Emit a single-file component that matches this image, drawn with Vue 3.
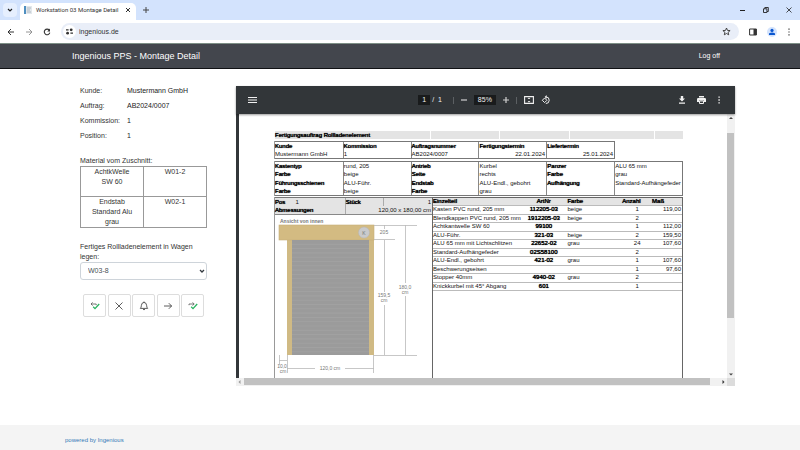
<template>
  <div class="browser">
    <!-- tab strip -->
    <div class="tab-strip">
      <button class="tab-search" aria-label="Search tabs">
        <svg width="6" height="6" viewBox="0 0 6 6"><path d="M1 2l2 2 2-2" fill="none" stroke="#1f1f1f" stroke-width="1.2" /></svg>
      </button>
      <div class="tab">
        <svg class="favicon" width="8" height="8" viewBox="0 0 8 8">
          <rect x="0" y="0" width="2" height="8" fill="#4f8fc0" />
          <rect x="2" y="0" width="6" height="8" fill="#e3e8ec" />
          <path d="M3 2h4M3 4h3M3 6h4" stroke="#b3bcc4" stroke-width="1" />
        </svg>
        <span class="tab-title">Workstation 03 Montage Detail</span>
        <button class="bare" aria-label="Close tab">
          <svg width="6" height="6" viewBox="0 0 6 6"><path d="M1 1l4 4M5 1L1 5" stroke="#333" stroke-width="1" /></svg>
        </button>
      </div>
      <button class="bare new-tab" aria-label="New tab">
        <svg width="6" height="6" viewBox="0 0 6 6"><path d="M3 0v6M0 3h6" stroke="#444" stroke-width="1" /></svg>
      </button>
      <div class="window-buttons">
        <button class="bare" aria-label="Minimize">
          <svg width="6" height="6" viewBox="0 0 6 6"><path d="M0 3.5h5" stroke="#222" stroke-width="1" /></svg>
        </button>
        <button class="bare" aria-label="Restore">
          <svg width="6" height="6" viewBox="0 0 6 6"><path d="M.5 1.8h3.4v3.7H.5zM1.8 1.8V.5h3.5v4H4" fill="none" stroke="#222" stroke-width=".9" /></svg>
        </button>
        <button class="bare" aria-label="Close">
          <svg width="6" height="6" viewBox="0 0 6 6"><path d="M.5.5l5 5M5.5.5l-5 5" stroke="#222" stroke-width=".8" /></svg>
        </button>
      </div>
    </div>

    <!-- address bar -->
    <div class="toolbar">
      <button class="bare" aria-label="Back">
        <svg width="8" height="8" viewBox="0 0 8 8"><path d="M7 4H1.3M4 1L1 4l3 3" fill="none" stroke="#333" stroke-width="1" /></svg>
      </button>
      <button class="bare" aria-label="Forward">
        <svg width="8" height="8" viewBox="0 0 8 8"><path d="M1 4h5.7M4 1l3 3-3 3" fill="none" stroke="#8a8a8a" stroke-width=".9" /></svg>
      </button>
      <button class="bare" aria-label="Reload">
        <svg width="8" height="8" viewBox="0 0 8 8"><path d="M6.3 2.2A2.8 2.8 0 1 0 6.8 4.6" fill="none" stroke="#333" stroke-width="1.1" /><path d="M7 .6v2.9H4.2z" fill="#333" /></svg>
      </button>
      <div class="omnibox">
        <span class="site-info">
          <svg width="7" height="7" viewBox="0 0 7 7"><path d="M0 1.8h2.6M4.4 5.2H7" stroke="#333" stroke-width="1.2" /><circle cx="5.2" cy="1.8" r="1.4" fill="#333" /><circle cx="1.6" cy="5.2" r="1.4" fill="#333" /></svg>
        </span>
        <input v-model="url" class="url" type="text" aria-label="Address" />
        <button class="bare" aria-label="Bookmark">
          <svg width="9" height="9" viewBox="0 0 9 9"><path d="M4.5 1l1 2.4 2.6.2-2 1.7.6 2.5-2.2-1.3-2.2 1.3.6-2.5-2-1.7 2.6-.2z" fill="none" stroke="#333" stroke-width=".9" /></svg>
        </button>
      </div>
      <button class="bare" aria-label="Side panel">
        <svg width="8" height="8" viewBox="0 0 8 8"><path d="M.6 1h6.8v6H.6z" fill="none" stroke="#333" stroke-width="1" /><path d="M4.5 1h3v6h-3z" fill="#333" /></svg>
      </button>
      <button class="bare" aria-label="Profile">
        <svg width="10" height="10" viewBox="0 0 10 10"><circle cx="5" cy="5" r="5" fill="#d3e3fd" /><circle cx="5" cy="3.4" r="1.6" fill="#0b57d0" /><path d="M2 8V7q0-1.5 3-1.5T8 7v1z" fill="#0b57d0" /></svg>
      </button>
      <button class="bare" aria-label="Menu">
        <svg width="4" height="8" viewBox="0 0 4 8"><path d="M1.4.6h1.2v1.2H1.4zM1.4 3.4h1.2v1.2H1.4zM1.4 6.2h1.2v1.2H1.4z" fill="#333" /></svg>
      </button>
    </div>

    <header class="navbar">
      <h1>Ingenious PPS - Montage Detail</h1>
      <a href="#">Log off</a>
    </header>

    <main class="content">
      <section class="side">
        <dl class="order">
          <div v-for="row in order" :key="row.label">
            <dt>{{ row.label }}</dt>
            <dd>{{ row.value }}</dd>
          </div>
        </dl>

        <table class="material">
          <caption>Material vom Zuschnitt:</caption>
          <tbody>
            <tr v-for="m in material" :key="m.place">
              <td>{{ m.name }}</td>
              <td>{{ m.place }}</td>
            </tr>
          </tbody>
        </table>

        <label class="cart-label" for="cart">Fertiges Rollladenelement in Wagen legen:</label>
        <div class="select-wrap">
          <select id="cart" v-model="cart">
            <option>W03-8</option>
          </select>
          <svg width="6" height="6" viewBox="0 0 6 6"><path d="M1 2l2 2 2-2" fill="none" stroke="#343a40" stroke-width="1.3" /></svg>
        </div>

        <div class="actions">
          <button aria-label="Fertig und zurück">
            <svg width="10" height="10" viewBox="0 0 10 10"><path d="M1.2 3h5v1.2M2.6 1.4L1 3l1.6 1.6" fill="none" stroke="#555" stroke-width=".8" /><path d="M3.2 5.8l1.8 1.8L9.2 3" fill="none" stroke="#27b35f" stroke-width="1.3" /></svg>
          </button>
          <button aria-label="Abbrechen">
            <svg width="10" height="10" viewBox="0 0 10 10"><path d="M1.5 1.5l7 7M8.5 1.5l-7 7" stroke="#333" stroke-width=".8" /></svg>
          </button>
          <button aria-label="Meldung">
            <svg width="10" height="10" viewBox="0 0 10 10"><path d="M1.3 7.4h7.4Q7.7 6.6 7.6 4.4 7.5 1.6 5 1.4 2.5 1.6 2.4 4.4 2.3 6.6 1.3 7.4zM5 .5v1M4 8.2q1 1.4 2 0" fill="none" stroke="#333" stroke-width=".8" /></svg>
          </button>
          <button aria-label="Weiter">
            <svg width="10" height="10" viewBox="0 0 10 10"><path d="M1 5h7.6M5.8 2.2L8.6 5 5.8 7.8" fill="none" stroke="#333" stroke-width=".8" /></svg>
          </button>
          <button aria-label="Fertig und weiter">
            <svg width="10" height="10" viewBox="0 0 10 10"><path d="M1 4.2V3h5M4.6 1.4L6.200 3 4.6 4.6" fill="none" stroke="#555" stroke-width=".8" /><path d="M3.2 5.8l1.8 1.8L9.2 3" fill="none" stroke="#27b35f" stroke-width="1.3" /></svg>
          </button>
        </div>
      </section>

      <section class="viewer">
        <div class="pdf-bar">
          <div class="pdf-left">
            <button class="bare" aria-label="Seitenleiste">
              <svg width="9" height="8" viewBox="0 0 9 8"><path d="M0 1.5h9M0 4h9M0 6.5h9" stroke="#f1f1f1" stroke-width="1" /></svg>
            </button>
          </div>
          <div class="pdf-mid">
            <input v-model="page" class="page-no" type="text" aria-label="Seite" />
            <span class="page-count">/ &nbsp;1</span>
            <i class="sep"></i>
            <button class="bare" aria-label="Verkleinern">
              <svg width="6" height="6" viewBox="0 0 6 6"><path d="M0 3h6" stroke="#d0d0d0" stroke-width="1.2" /></svg>
            </button>
            <input v-model="zoom" class="zoom" type="text" aria-label="Zoom" />
            <button class="bare" aria-label="Vergrößern">
              <svg width="6" height="6" viewBox="0 0 6 6"><path d="M0 3h6M3 0v6" stroke="#d0d0d0" stroke-width="1.2" /></svg>
            </button>
            <i class="sep"></i>
            <button class="bare" aria-label="An Seite anpassen">
              <svg width="10" height="8" viewBox="0 0 10 8"><path d="M.6.6h8.8v6.8H.6z" fill="none" stroke="#f1f1f1" stroke-width="1.1" /><path d="M5 1.5l1.4 1.6H3.6zM5 6.5l1.4-1.6H3.6z" fill="#f1f1f1" /></svg>
            </button>
            <button class="bare" aria-label="Drehen">
              <svg width="10" height="10" viewBox="0 0 10 10"><path d="M3.6 3l2.3 2.3-2.3 2.3-2.3-2.3z" fill="none" stroke="#f1f1f1" stroke-width="1" /><path d="M5 1.9a3.3 3.3 0 1 1 -.2 6.6" fill="none" stroke="#f1f1f1" stroke-width="1" /><path d="M5.6 0v3.8L3.6 1.9z" fill="#f1f1f1" /></svg>
            </button>
          </div>
          <div class="pdf-right">
            <button class="bare" aria-label="Herunterladen">
              <svg width="8" height="8" viewBox="0 0 8 8"><path d="M2.8 0h2.4v2.6H7L4 5.6l-3-3h1.8zM1 6.6h6v1.2H1z" fill="#f1f1f1" /></svg>
            </button>
            <button class="bare" aria-label="Drucken">
              <svg width="9" height="8" viewBox="0 0 9 8"><path d="M2 0h5v1.6H2zM1.2 2h6.6Q9 2 9 3.2V6H7V4.6H2V6H0V3.2Q0 2 1.2 2z" fill="#f1f1f1" /><path d="M2.5 5h4v2.5h-4z" fill="none" stroke="#f1f1f1" /></svg>
            </button>
            <button class="bare" aria-label="Weitere Aktionen">
              <svg width="4" height="8" viewBox="0 0 4 8"><path d="M1.4.4h1.4v1.4H1.4zM1.4 3.3h1.4v1.4H1.4zM1.4 6.2h1.4v1.4H1.4z" fill="#f1f1f1" /></svg>
            </button>
          </div>
        </div>

        <div class="pdf-body">
          <article class="sheet">
            <h2>
              <span class="strong">Fertigungsauftrag Rollladenelement</span>
              <i></i><i></i><i class="wide"></i><i class="last"></i>
            </h2>

            <table class="head">
              <thead>
                <tr><th v-for="h in head" :key="h.label">{{ h.label }}</th></tr>
              </thead>
              <tbody>
                <tr><td v-for="h in head" :key="h.label" :class="{ num: h.num }">{{ h.value }}</td></tr>
              </tbody>
            </table>

            <table class="specs">
              <tbody>
                <tr v-for="(row, i) in specs" :key="i">
                  <template v-for="(cell, j) in row" :key="j">
                    <th v-if="j % 2 === 0">{{ cell }}</th>
                    <td v-else>{{ cell }}</td>
                  </template>
                </tr>
              </tbody>
            </table>

            <div class="detail">
              <div class="position">
                <table class="size">
                  <tbody>
                    <tr>
                      <th class="pos">Pos</th>
                      <td>1</td>
                      <th class="line">Stück</th>
                      <td class="num line">1</td>
                    </tr>
                    <tr>
                      <th colspan="2">Abmessungen</th>
                      <td class="num line" colspan="2">120,00 x 180,00 cm</td>
                    </tr>
                  </tbody>
                </table>

                <!-- shutter seen from inside, with its dimensions -->
                <svg class="drawing" viewBox="-1 0 157 162">
                  <text x="4" y="8" class="caption">Ansicht von innen</text>
                  <rect x="11" y="24" width="87" height="116" fill="#d0ba84" />
                  <rect x="3" y="10" width="95" height="15" fill="#d3bb82" stroke="#c5ae78" stroke-width=".6" />
                  <rect x="16" y="25" width="77" height="115" fill="#9b9b9b" />
                  <path v-for="n in 26" :key="n" :d="`M16 ${25 + n * 4.3}h77`" stroke="#a6a6a6" stroke-width=".6" />
                  <circle cx="88" cy="17.5" r="5.5" fill="#c9cacc" stroke="#b5b5b5" stroke-width=".5" />
                  <text x="88" y="19.5" class="dim">K</text>
                  <g fill="none" stroke="#b9b9b9" stroke-width=".8">
                    <path d="M98 10.5h43M98 24.5h21M98 140.5h43" />
                    <path d="M108.5 10v4M108.5 25v52M108.5 90v50M129.5 10v58M129.5 81v59" />
                    <path d="M11.5 140v18M97.5 140v18M11 153.5h28M69 153.5h29M3.5 140v10M3 145.5h8" />
                  </g>
                  <text x="108" y="19" class="dim">205</text>
                  <text x="108" y="82" class="dim">159,5</text>
                  <text x="108" y="87" class="dim">cm</text>
                  <text x="129" y="74" class="dim">180,0</text>
                  <text x="129" y="79" class="dim">cm</text>
                  <text x="54" y="155" class="dim">120,0 cm</text>
                  <text x="6" y="153" class="dim">10,0</text>
                  <text x="7" y="158" class="dim">cm</text>
                </svg>
              </div>

              <div class="parts-box">
                <table class="parts">
                  <colgroup>
                    <col class="c-name" /><col class="c-no" /><col class="c-color" /><col class="c-count" /><col class="c-size" />
                  </colgroup>
                  <thead>
                    <tr><th>Einzelteil</th><th class="mid">ArtNr</th><th>Farbe</th><th>Anzahl</th><th>Maß</th></tr>
                  </thead>
                  <tbody>
                    <tr v-for="p in parts" :key="p[1] + p[0]">
                      <td>{{ p[0] }}</td>
                      <td class="mid strong">{{ p[1] }}</td>
                      <td>{{ p[2] }}</td>
                      <td class="mid">{{ p[3] }}</td>
                      <td class="num">{{ p[4] }}</td>
                    </tr>
                  </tbody>
                </table>
              </div>
            </div>
          </article>

          <div class="v-scroll">
            <svg width="8" height="8" viewBox="0 0 8 8"><path d="M4 3l2 2H2z" fill="#444" /></svg>
            <div class="track"><div class="thumb"></div></div>
            <svg width="8" height="8" viewBox="0 0 8 8"><path d="M4 5.5l2-2H2z" fill="#444" /></svg>
          </div>
        </div>

        <div class="h-scroll">
          <svg width="8" height="8" viewBox="0 0 8 8"><path d="M2.5 4l2-2v4z" fill="#999" /></svg>
          <div class="track"><div class="thumb"></div></div>
          <svg width="8" height="8" viewBox="0 0 8 8"><path d="M5.5 4l-2-2v4z" fill="#333" /></svg>
          <i class="corner"></i>
        </div>
      </section>
    </main>

    <footer class="footer"><a href="#">powered by Ingenious</a></footer>
  </div>
</template>

<script setup>
import { ref } from 'vue';

const url = ref('ingenious.de');
const cart = ref('W03-8');
const page = ref('1');
const zoom = ref('85%');

const order = [
  { label: 'Kunde:', value: 'Mustermann GmbH' },
  { label: 'Auftrag:', value: 'AB2024/0007' },
  { label: 'Kommission:', value: '1' },
  { label: 'Position:', value: '1' }
];

const material = [
  { name: 'AchtkWelle SW 60', place: 'W01-2' },
  { name: 'Endstab Standard Alu grau', place: 'W02-1' }
];

const head = [
  { label: 'Kunde', value: 'Mustermann GmbH' },
  { label: 'Kommission', value: '1' },
  { label: 'Auftragsnummer', value: 'AB2024/0007' },
  { label: 'Fertigungstermin', value: '22.01.2024', num: true },
  { label: 'Liefertermin', value: '25.01.2024', num: true }
];

const specs = [
  ['Kastentyp', 'rund, 205', 'Antrieb', 'Kurbel', 'Panzer', 'ALU 65 mm'],
  ['Farbe', 'beige', 'Seite', 'rechts', 'Farbe', 'grau'],
  ['Führungsschienen', 'ALU-Führ.', 'Endstab', 'ALU-Endl., gebohrt', 'Aufhängung', 'Standard-Aufhängefeder'],
  ['Farbe', 'beige', 'Farbe', 'grau', '', '']
];

const parts = [
  ['Kasten PVC rund, 205 mm', '112205-03', 'beige', '1', '119,00'],
  ['Blendkappen PVC rund, 205 mm', '1912205-03', 'beige', '2', ''],
  ['Achtkantwelle SW 60', '99100', '', '1', '112,00'],
  ['ALU-Führ.', '321-03', 'beige', '2', '159,50'],
  ['ALU 65 mm mit Lichtschlitzen', '22652-02', 'grau', '24', '107,60'],
  ['Standard-Aufhängefeder', '02S58100', '', '2', ''],
  ['ALU-Endl., gebohrt', '421-02', 'grau', '1', '107,60'],
  ['Beschwerungseisen', '', '', '1', '97,60'],
  ['Stopper 40mm', '4940-02', 'grau', '2', ''],
  ['Knickkurbel mit 45° Abgang', '601', '', '1', '']
];
</script>

<style>
body {
  margin: 0;
  background: #fff;
}
</style>

<style scoped>
.browser {
  display: flex;
  flex-direction: column;
  min-height: 100vh;
  font: 7px/10px "Liberation Sans", Arial, sans-serif;
  color: #333;
}
.browser * {
  box-sizing: border-box;
}
button, input, select {
  font: inherit;
  color: inherit;
  margin: 0;
}
svg {
  display: block;
  flex: none;
}
.bare {
  border: 0;
  padding: 0;
  background: none;
}

/* browser chrome */
.tab-strip {
  display: flex;
  align-items: center;
  height: 20px;
  padding: 0 8px 0 3px;
  background: #d3e3fd;
  font: 6px/10px Roboto, "Liberation Sans", sans-serif;
}
.tab-search {
  display: grid;
  place-items: center;
  width: 14px;
  height: 14px;
  margin-right: 3px;
  padding: 0;
  border: 0;
  border-radius: 4px;
  background: #e6effe;
}
.tab {
  display: flex;
  align-items: center;
  align-self: flex-end;
  gap: 4px;
  width: 116px;
  height: 17px;
  padding: 0 5px 3px 4px;
  border-radius: 5px 5px 0 0;
  background: #fff;
}
.tab-title {
  flex: 1;
  white-space: nowrap;
}
.new-tab {
  margin-left: 7px;
}
.window-buttons {
  display: flex;
  gap: 17px;
  margin-left: auto;
}
.toolbar {
  display: flex;
  align-items: center;
  gap: 10px;
  height: 23px;
  padding: 0 9px 0 7px;
  background: #fff;
}
.omnibox {
  display: flex;
  align-items: center;
  flex: 1;
  height: 17px;
  padding: 0 8px 0 2px;
  border-radius: 9px;
  background: #e9eef8;
}
.site-info {
  display: grid;
  place-items: center;
  width: 13px;
  height: 13px;
  border-radius: 50%;
  background: #fff;
}
.url {
  flex: 1;
  min-width: 0;
  padding: 0 3px;
  border: 0;
  background: none;
}

/* page */
.navbar {
  display: flex;
  align-items: center;
  justify-content: space-between;
  height: 26px;
  padding: 0 80px 0 72px;
  border-top: 1px solid #7d8f86;
  border-bottom: 1px solid #101114;
  background: #43464d;
  color: #fff;
}
.navbar h1 {
  margin: 0;
  font-size: 9px;
  font-weight: 400;
}
.navbar a {
  color: #fff;
  text-decoration: none;
}
.content {
  display: flex;
  flex: 1;
  gap: 29px;
  padding: 17px 65px 39px 80px;
}
.side {
  flex: 0 0 127px;
}
.order {
  margin: 0 0 10px;
}
.order div {
  display: flex;
  height: 15px;
}
.order dt {
  width: 47px;
}
.order dd {
  margin: 0;
  color: #222;
}
.material {
  width: 100%;
  border-collapse: collapse;
  table-layout: fixed;
  text-align: center;
}
.material caption {
  text-align: left;
  white-space: nowrap;
}
.material td {
  height: 30px;
  padding: 0 8px;
  border: 1px solid #999;
  vertical-align: top;
}
.cart-label {
  display: block;
  margin-top: 14px;
}
.select-wrap {
  display: flex;
  align-items: center;
  position: relative;
}
.select-wrap select {
  width: 100%;
  height: 18px;
  padding: 0 7px;
  border: 1px solid #ced4da;
  border-radius: 3px;
  background: #fff;
  color: #495057;
  appearance: none;
}
.select-wrap svg {
  position: absolute;
  right: 2px;
  pointer-events: none;
}
.actions {
  display: flex;
  justify-content: space-between;
  margin: 14px 3px 0;
}
.actions button {
  display: grid;
  place-items: center;
  width: 23px;
  height: 23px;
  padding: 0;
  border: 1px solid #ddd;
  border-radius: 2px;
  background: #fff;
}

/* pdf viewer */
.viewer {
  display: flex;
  flex: 1;
  flex-direction: column;
  min-width: 0;
}
.pdf-bar {
  display: flex;
  align-items: center;
  position: relative;
  height: 28px;
  padding: 0 14px 0 12px;
  background: #323639;
  color: #f1f1f1;
  box-shadow: 0 1px 2px rgba(0, 0, 0, 0.4);
}
.pdf-left, .pdf-right {
  display: flex;
  flex: 1;
}
.pdf-right {
  justify-content: flex-end;
  align-items: center;
  gap: 11px;
}
.pdf-mid {
  display: flex;
  align-items: center;
  gap: 7px;
}
.pdf-mid input {
  height: 10px;
  padding: 0;
  border: 0;
  background: #191b1c;
  text-align: center;
}
.page-no {
  width: 12px;
}
.page-count {
  margin: 0 4px 0 -5px;
}
.zoom {
  width: 22px;
}
.sep {
  width: 1px;
  height: 7px;
  background: #5c6063;
}
.pdf-body {
  display: flex;
  flex: 1;
  min-height: 0;
  border-left: 3px solid #323639;
}
.sheet {
  display: flex;
  flex: 1;
  flex-direction: column;
  gap: 2px;
  min-width: 0;
  padding: 17px 44px 0 36px;
  background: #fff;
  color: #111;
  font-size: 6px;
  line-height: 8px;
}
.sheet h2 {
  display: flex;
  height: 8px;
  margin: 0;
  background: #e4e4e4;
  font-size: 6px;
  font-weight: 400;
}
.sheet h2 .strong {
  width: 38%;
}
.sheet h2 i {
  width: 17%;
  border-left: 1px solid #fff;
}
.sheet h2 .wide {
  width: 21%;
}
.sheet h2 .last {
  flex: 1;
}
.strong, .sheet th {
  font-weight: 400;
  color: #000;
  text-shadow: 0 0 0 #000, 0 0 1px #000;
}
.sheet table {
  width: 100%;
  border-collapse: separate;
  border-spacing: 0;
  table-layout: fixed;
}
.sheet th, .sheet td {
  padding: 0;
  text-align: left;
  white-space: nowrap;
}
.sheet .num {
  padding-right: 1px;
  text-align: right;
}
.sheet .mid {
  text-align: center;
}
.sheet .head {
  width: calc(100% * 5 / 6);
  height: 17px;
  border: 1px solid #777;
  border-width: 1px 1px 1px 0;
  box-shadow: -1px 0 #999;
}
.head th + th, .head td + td,
.specs th + td, .specs td + th {
  border-left: 1px solid #888;
}
.sheet .specs {
  height: 35px;
  border: 1px solid #777;
  border-width: 1px 1px 1px 0;
  box-shadow: -1px 0 #999;
}
.detail {
  display: grid;
  flex: 1;
  grid-template-columns: 157fr 251fr;
  margin-top: -1px;
}
.position {
  min-width: 0;
  border-top: 1px solid #777;
  box-shadow: -1px 0 #999;
}
.sheet .size {
  height: 17px;
  border-bottom: 1px solid #888;
  background: #e4e4e4;
}
.size .pos {
  width: 13%;
}
.size th.line {
  width: 24%;
}
.size .line {
  border-left: 1px solid #aaa;
}
.drawing {
  width: 100%;
}
.caption {
  fill: #777;
  font-size: 5px;
  font-weight: 700;
}
.dim {
  fill: #777;
  font-size: 5px;
  text-anchor: middle;
}
.parts-box {
  min-width: 0;
  border: solid #666;
  border-width: 1px 1px 0;
}
.sheet .parts {
  height: 93px;
}
.parts th {
  background: #e4e4e4;
}
.parts td, .parts th {
  border-bottom: 1px solid #bbb;
  line-height: 7px;
}
.c-name { width: 35%; }
.c-no { width: 19%; }
.c-color { width: 22%; }
.c-count { width: 12%; }
.c-size { width: 12%; }

/* scrollbars */
.v-scroll, .h-scroll {
  display: flex;
  background: #f1f1f1;
}
.v-scroll {
  flex: 0 0 8px;
  flex-direction: column;
}
.h-scroll {
  flex: 0 0 8px;
}
.track {
  flex: 1;
}
.v-scroll .track {
  padding-top: 11px;
}
.v-scroll .thumb {
  height: 78%;
  margin: 0 1px 0 0;
  background: #c1c1c1;
}
.h-scroll .thumb {
  width: 98%;
  height: 7px;
  background: #c1c1c1;
}
.corner {
  width: 8px;
  background: #dcdcdc;
}

.footer {
  display: flex;
  align-items: center;
  height: 25px;
  padding: 4px 65px 0;
  background: #f4f4f4;
  font-size: 6px;
}
.footer a {
  color: #337ab7;
  text-decoration: none;
}
</style>
